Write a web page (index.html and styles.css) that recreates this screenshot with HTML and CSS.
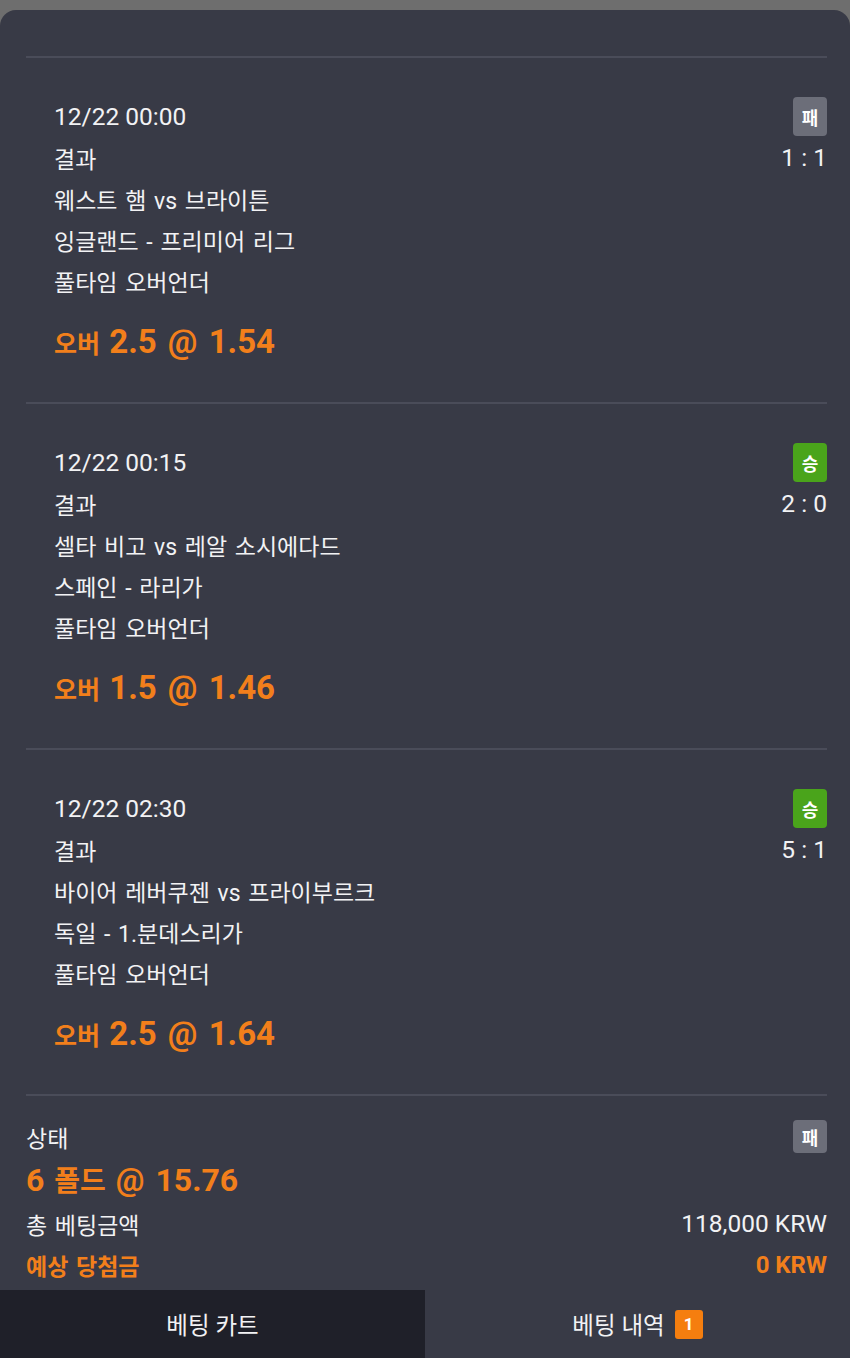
FILE: index.html
```html
<!DOCTYPE html>
<html lang="ko">
<head>
  <meta charset="UTF-8">
  <meta name="viewport" content="width=device-width, initial-scale=1.0">
  <title>베팅 내역</title>
  <link rel="stylesheet" href="styles.css">
</head>
<body>

  <div class="sheet">
    <div class="slip-list">

      <div class="slip">
        <div class="row">
          <span class="num">12/22 00:00</span>
          <span class="badge lose">패</span>
        </div>
        <div class="row">
          <span>결과</span>
          <span class="num">1 : 1</span>
        </div>
        <div class="row">웨스트 햄 vs 브라이튼</div>
        <div class="row">잉글랜드 - 프리미어 리그</div>
        <div class="row">풀타임 오버언더</div>
        <div class="pick">오버 <span class="num">2.5 @ 1.54</span></div>
      </div>

      <div class="slip">
        <div class="row">
          <span class="num">12/22 00:15</span>
          <span class="badge win">승</span>
        </div>
        <div class="row">
          <span>결과</span>
          <span class="num">2 : 0</span>
        </div>
        <div class="row">셀타 비고 vs 레알 소시에다드</div>
        <div class="row">스페인 - 라리가</div>
        <div class="row">풀타임 오버언더</div>
        <div class="pick">오버 <span class="num">1.5 @ 1.46</span></div>
      </div>

      <div class="slip">
        <div class="row">
          <span class="num">12/22 02:30</span>
          <span class="badge win">승</span>
        </div>
        <div class="row">
          <span>결과</span>
          <span class="num">5 : 1</span>
        </div>
        <div class="row">바이어 레버쿠젠 vs 프라이부르크</div>
        <div class="row">독일 - 1.분데스리가</div>
        <div class="row">풀타임 오버언더</div>
        <div class="pick">오버 <span class="num">2.5 @ 1.64</span></div>
      </div>

      <div class="summary">
        <div class="row">
          <span>상태</span>
          <span class="badge lose small">패</span>
        </div>
        <div class="total-odds"><span class="num">6</span> 폴드 <span class="num">@ 15.76</span></div>
        <div class="row">
          <span>총 베팅금액</span>
          <span class="num">118,000 KRW</span>
        </div>
        <div class="row highlight">
          <span>예상 당첨금</span>
          <span class="num">0 KRW</span>
        </div>
      </div>
    </div>

    <div class="tabs">
      <div class="tab cart">베팅 카트</div>
      <div class="tab history">베팅 내역 <span class="count">1</span></div>
    </div>
  </div>

</body>
</html>
```

FILE: styles.css
```css
body {
  font-family: Roboto, "Noto Sans CJK KR", sans-serif;
  margin: 0;
  padding: 0;
  background-color: #6e6e6e; /* page behind the sheet */
  color: #f2f2f4;
  height: 1358px;
  overflow: hidden;
}

.sheet {
  margin-top: 10px;
  height: 1348px;
  background-color: #383a46;
  border-radius: 16px 16px 0 0;
  display: flex;
  flex-direction: column;
  overflow: hidden;
}

.slip-list {
  flex: 1;
  padding: 46px 23px 0 26px;
}

.slip {
  border-top: 2px solid #4a4c59;
  padding: 38px 0 36px 28px;
}

.row {
  display: flex;
  justify-content: space-between;
  align-items: center;
  height: 41px;
  font-size: 23px;
  word-spacing: 2px;
}

.row .num {
  font-size: 24.5px;
  word-spacing: 0;
}

.badge {
  display: flex;
  align-items: center;
  justify-content: center;
  width: 34px;
  height: 39px;
  border-radius: 4px;
  font-size: 18px;
  font-weight: 700;
  color: #fff;
}

.badge.small {
  height: 33px;
}

.badge.lose {
  background-color: #6c6e79;
}

.badge.win {
  background-color: #4aa41b;
}

.pick {
  margin-top: 17px;
  height: 48px;
  line-height: 48px;
  font-size: 25px;
  font-weight: 700;
  color: #f27f1b;
  word-spacing: 3px;
}

.pick .num {
  font-size: 33px;
}

.summary {
  border-top: 2px solid #4a4c59;
  padding-top: 20px;
}

.total-odds {
  height: 46px;
  line-height: 46px;
  font-size: 28px;
  font-weight: 700;
  color: #f27f1b;
  word-spacing: 3px;
}

.total-odds .num {
  font-size: 32px;
}

.row.highlight {
  font-weight: 700;
  color: #f27f1b;
}

.row.highlight .num {
  font-size: 24px;
}

.tabs {
  display: flex;
  height: 68px;
}

.tab {
  flex: 1;
  display: flex;
  align-items: center;
  justify-content: center;
  gap: 10px;
  font-size: 23.5px;
}

.tab.cart {
  background-color: #1f2029;
}

.count {
  display: flex;
  align-items: center;
  justify-content: center;
  width: 28px;
  height: 29px;
  border-radius: 3px;
  background-color: #f57e0f;
  font-size: 17px;
  font-weight: 700;
  color: #fff;
}
```
